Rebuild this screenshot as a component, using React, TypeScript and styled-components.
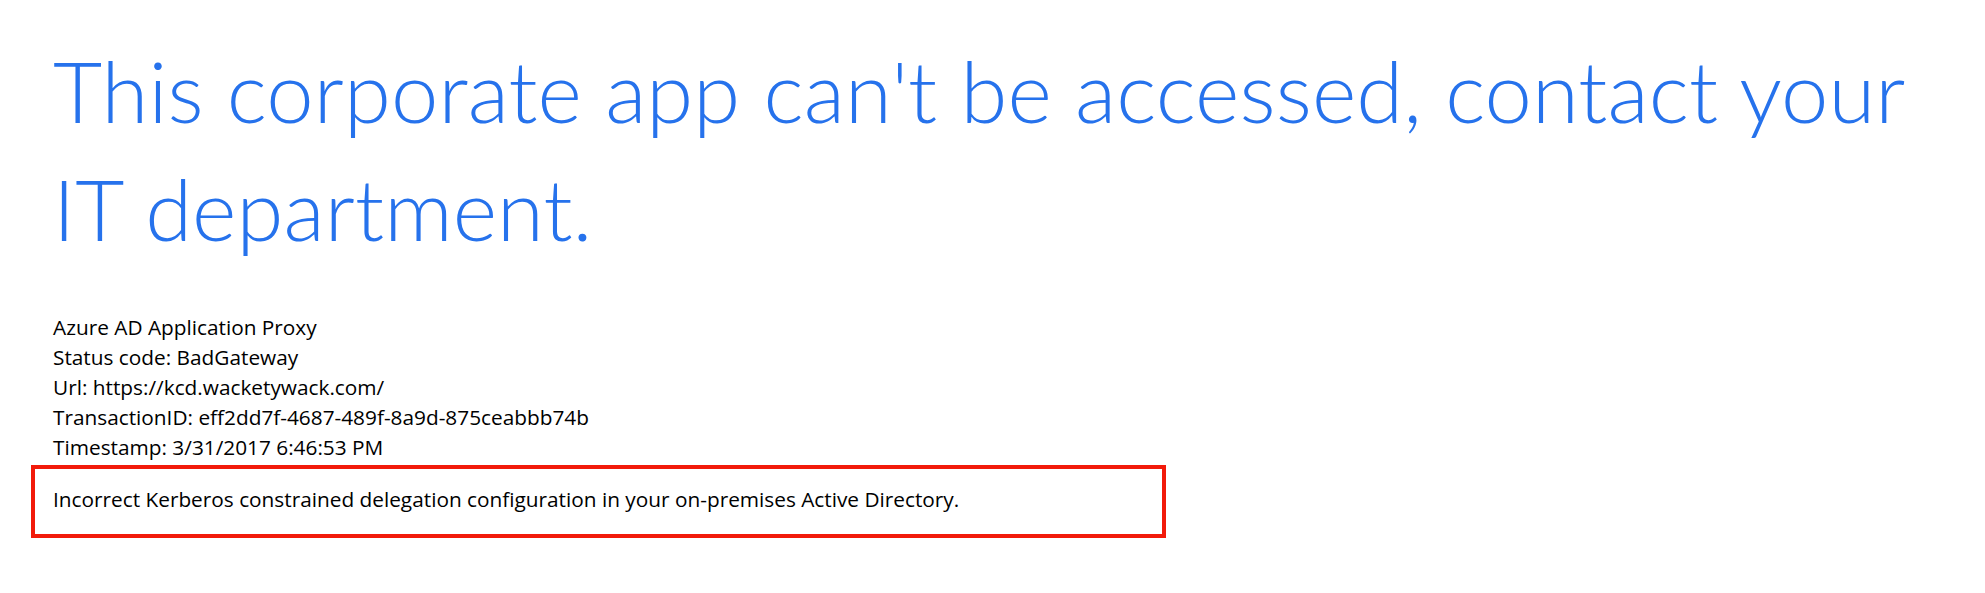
import React from "react";
import styled, { createGlobalStyle } from "styled-components";

const GlobalStyle = createGlobalStyle`
  html, body {
    margin: 0;
    padding: 0;
    background: #ffffff;
  }
  body {
    font-family: "Open Sans", "Noto Sans", sans-serif;
    color: #000000;
  }
`;

const Page = styled.main`
  padding: 31px 0 0 31px;
  box-sizing: border-box;
  width: 1985px;
`;

const Title = styled.h1`
  margin: 0 0 0 22px;
  max-width: 1880px;
  font-family: "Lato", "Open Sans", sans-serif;
  font-weight: 300;
  font-size: 85px;
  line-height: 118px;
  letter-spacing: 0.1px;
  color: #2672ec;
`;

const Info = styled.div`
  margin: 45px 0 0 22px;
  font-size: 20.8px;
  line-height: 30px;
`;

const InfoLine = styled.div`
  white-space: nowrap;
`;

const Highlight = styled.div`
  margin-top: 3px;
  width: 1135px;
  box-sizing: border-box;
  border: 4px solid #f21a0a;
  padding: 15px 18px 20px 18px;
  font-size: 20.8px;
  line-height: 30px;
`;

const details = [
  "Azure AD Application Proxy",
  "Status code: BadGateway",
  "Url: https://kcd.wacketywack.com/",
  "TransactionID: eff2dd7f-4687-489f-8a9d-875ceabbb74b",
  "Timestamp: 3/31/2017 6:46:53 PM",
];

export default function App() {
  return (
    <>
      <GlobalStyle />
      <Page>
        <Title>This corporate app can't be accessed, contact your IT department.</Title>
        <Info>
          {details.map((d) => (
            <InfoLine key={d}>{d}</InfoLine>
          ))}
        </Info>
        <Highlight>
          Incorrect Kerberos constrained delegation configuration in your on-premises Active Directory.
        </Highlight>
      </Page>
    </>
  );
}
